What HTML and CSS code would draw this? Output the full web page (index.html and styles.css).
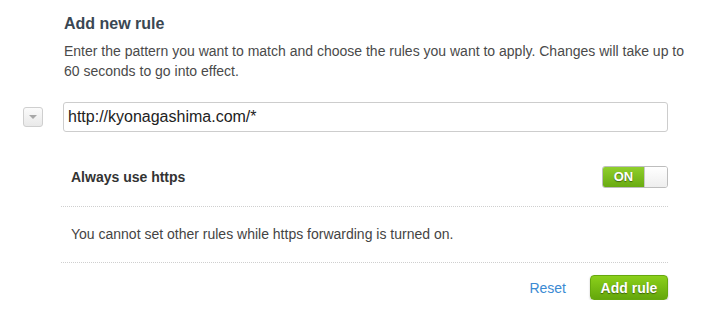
FILE: index.html
```html
<!DOCTYPE html>
<html lang="en">
<head>
    <meta charset="UTF-8">
    <title>Add new rule</title>
    <link rel="stylesheet" href="styles.css">
</head>
<body>
    <div class="rule-form">
        <h2>Add new rule</h2>
        <p class="intro">Enter the pattern you want to match and choose the rules you want to apply. Changes will take up to 60 seconds to go into effect.</p>

        <div class="pattern-row">
            <button class="collapse-btn" type="button"><span class="caret"></span></button>
            <input class="pattern-input" type="text" value="http://kyonagashima.com/*">
        </div>

        <div class="setting-row">
            <span class="setting-label">Always use https</span>
            <div class="toggle">
                <span class="toggle-on">ON</span>
                <span class="toggle-knob"></span>
            </div>
        </div>

        <div class="setting-row notice">
            You cannot set other rules while https forwarding is turned on.
        </div>

        <div class="actions">
            <a href="#" class="reset-link">Reset</a>
            <button class="btn-add" type="button">Add rule</button>
        </div>
    </div>
</body>
</html>
```

FILE: styles.css
```css
* {
    margin: 0;
    padding: 0;
    box-sizing: border-box;
}

body {
    background: #fff;
    font-family: "Liberation Sans", Arial, sans-serif;
    color: #444;
}

.rule-form {
    width: 668px;
    padding: 14px 0 0 61px;
}

.rule-form h2 {
    font-size: 16px;
    line-height: 20px;
    font-weight: bold;
    color: #3a4753;
    margin-left: 3px;
}

.intro {
    width: 630px;
    margin: 7px 0 0 3px;
    font-size: 14px;
    line-height: 20px;
    color: #4a4a4a;
}

.pattern-row {
    display: flex;
    align-items: center;
    margin: 21px 0 0 -38px;
}

.collapse-btn {
    width: 20px;
    height: 20px;
    margin-right: 20px;
    border: 1px solid #cfcfcf;
    border-radius: 3px;
    background: linear-gradient(#fbfbfb, #e9e9e9);
    display: flex;
    align-items: center;
    justify-content: center;
    cursor: pointer;
}

.caret {
    width: 0;
    height: 0;
    border-left: 4px solid transparent;
    border-right: 4px solid transparent;
    border-top: 4px solid #a8a8a8;
}

.pattern-input {
    flex: 1;
    height: 30px;
    padding: 0 4px;
    border: 1px solid #cdcdcd;
    border-radius: 3px;
    font-family: "Liberation Sans", Arial, sans-serif;
    font-size: 16px;
    color: #222;
    outline: none;
}

.setting-row {
    display: flex;
    justify-content: space-between;
    align-items: center;
    margin-top: 16px;
    padding: 18px 0 18px 10px;
    border-bottom: 1px dotted #cfcfcf;
    font-size: 14px;
    line-height: 20px;
}

.setting-row.notice {
    margin-top: 0;
    padding: 17px 0 18px 10px;
    color: #444;
}

.setting-label {
    font-weight: bold;
    color: #333;
}

.toggle {
    display: flex;
    width: 66px;
    height: 22px;
    border-radius: 3px;
    overflow: hidden;
    border: 1px solid #bdbdbd;
}

.toggle-on {
    width: 41px;
    background: linear-gradient(#8fcf2c, #69ab12);
    color: #fff;
    font-size: 13px;
    font-weight: bold;
    line-height: 20px;
    text-align: center;
    text-shadow: 0 1px 1px rgba(0, 0, 0, 0.45);
}

.toggle-knob {
    flex: 1;
    background: linear-gradient(#ffffff, #eeeeee);
    border-left: 1px solid #c8c8c8;
}

.actions {
    display: flex;
    justify-content: flex-end;
    align-items: center;
    gap: 24px;
    margin-top: 12px;
}

.reset-link {
    font-size: 14px;
    color: #3b8ad3;
    text-decoration: none;
}

.btn-add {
    width: 78px;
    height: 25px;
    border: 1px solid #66a80e;
    border-radius: 4px;
    background: linear-gradient(#8bd01b, #64a70b);
    color: #fff;
    font-family: "Liberation Sans", Arial, sans-serif;
    font-size: 14px;
    font-weight: bold;
    text-shadow: 0 1px 1px rgba(0, 0, 0, 0.45);
    box-shadow: 0 1px 2px rgba(0, 0, 0, 0.25);
    cursor: pointer;
}
```
